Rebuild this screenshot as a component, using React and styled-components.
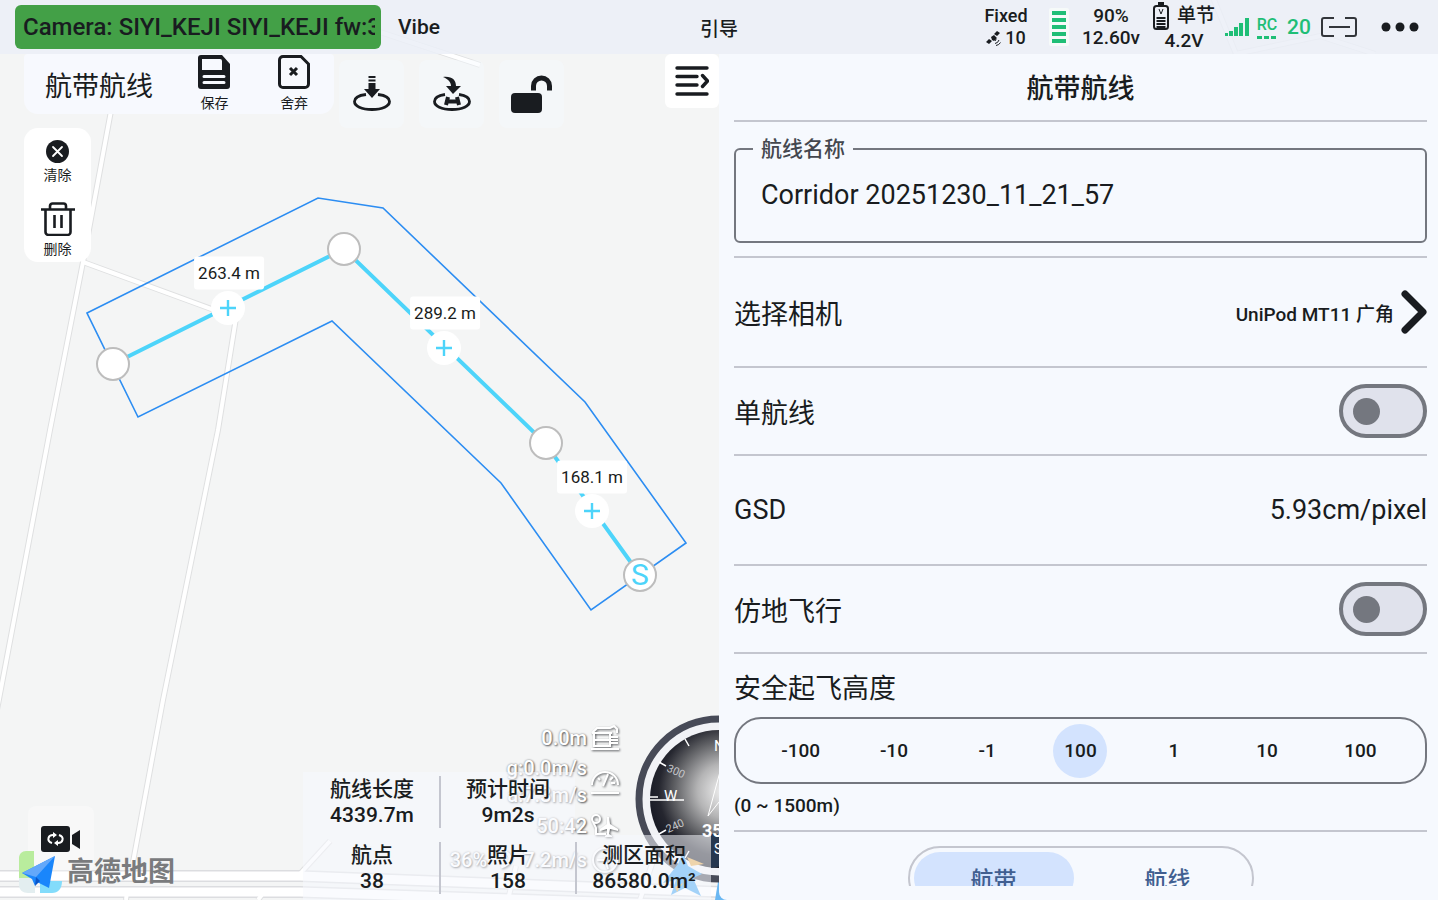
import React, { useState } from 'react';
import styled, { createGlobalStyle } from 'styled-components';

const GlobalStyle = createGlobalStyle`
	* {
		box-sizing: border-box;
	}
	body {
		margin: 0;
		overflow: hidden;
		font-family: Roboto, 'Noto Sans CJK SC', sans-serif;
		color: #191c20;
	}
	button, input {
		font: inherit;
		color: inherit;
		margin: 0;
	}
	button {
		border: 0;
		padding: 0;
		background: none;
		cursor: pointer;
	}
	svg {
		display: block;
		flex: none;
	}
`;

const Screen = styled.div`
	position: relative;
	display: flex;
	flex-direction: column;
	height: 100vh;
	overflow: hidden;
	background: #f4f5f5;
`;

/* ---------- map ---------- */

const MapLayer = styled.div`
	position: absolute;
	inset: 0;
	overflow: hidden;
`;

const Pin = styled.button`
	position: absolute;
	left: ${p => p.$x}px;
	top: ${p => p.$y}px;
	width: 34px;
	height: 34px;
	transform: translate(-50%, -50%);
	display: flex;
	align-items: center;
	justify-content: center;
	border-radius: 50%;
	background: #fff;
	border: ${p => (p.$plain ? '0' : '2px solid #bdbdbd')};
	color: #4dd4fa;
	font-size: 30px;
	line-height: 30px;
`;

const Distance = styled.span`
	position: absolute;
	left: ${p => p.$x}px;
	top: ${p => p.$y}px;
	transform: translate(-50%, -50%);
	padding: 0 4px;
	border-radius: 3px;
	background: #fff;
	font-size: 17px;
	line-height: 33px;
	white-space: nowrap;
`;

/* ---------- status bar ---------- */

const TopBar = styled.header`
	position: relative;
	display: grid;
	grid-template-columns: 1fr auto 1fr;
	align-items: center;
	height: 54px;
	padding: 0 2px;
	background: rgba(235, 238, 247, 0.85);
	font-weight: 500;
`;

const BarLeft = styled.div`
	display: flex;
	align-items: center;
	gap: 17px;
	padding-left: 13px;
	font-size: 21px;
	min-width: 0;
`;

const CameraBanner = styled.div`
	width: 366px;
	height: 44px;
	padding: 0 6px 0 8px;
	border-radius: 6px;
	background: #43a047;
	font-size: 24px;
	line-height: 44px;

	span {
		display: block;
		overflow: hidden;
		white-space: nowrap;
	}
`;

const FlightMode = styled.div`
	font-size: 19px;
`;

const BarRight = styled.div`
	display: flex;
	align-items: center;
	justify-content: flex-end;
	font-size: 19px;
	line-height: 22px;
`;

const Status = styled.div`
	display: flex;
	flex-direction: column;
	align-items: center;
	justify-content: center;
	width: ${p => p.$w}px;
	color: ${p => (p.$good ? '#1fbe76' : 'inherit')};
	font-size: ${p => p.$size || 19}px;
	white-space: nowrap;
`;

const Inline = styled.span`
	display: flex;
	align-items: center;
	gap: ${p => p.$gap || 4}px;
`;

/* ---------- map tools ---------- */

const Body = styled.div`
	position: relative;
	display: grid;
	grid-template-columns: 1fr 1fr;
	flex: 1;
	min-height: 0;
`;

const MapPane = styled.main`
	position: relative;
	overflow: hidden;
	pointer-events: none;

	button {
		pointer-events: auto;
	}
`;

const ToolRow = styled.div`
	display: flex;
	align-items: flex-start;
	padding-left: 24px;
`;

const RouteCard = styled.div`
	display: flex;
	align-items: center;
	width: 310px;
	height: 60px;
	padding-left: 21px;
	border-radius: 4px 4px 14px 14px;
	background: #f7f9fe;
	font-size: 27px;
`;

const RouteName = styled.span`
	width: 130px;
`;

const IconButton = styled.button`
	display: flex;
	flex-direction: column;
	align-items: center;
	gap: ${p => p.$gap || 2}px;
	width: ${p => p.$w || 80}px;
	font-size: 14px;
	line-height: 20px;
`;

const SquareTools = styled.div`
	display: flex;
	gap: 15px;
	padding: 6px 0 0 5px;
`;

const SquareButton = styled.button`
	display: flex;
	align-items: center;
	justify-content: center;
	width: 65px;
	height: 68px;
	border-radius: 8px;
	background: rgba(246, 249, 255, 0.4);
`;

const CollapseButton = styled.button`
	display: flex;
	align-items: center;
	justify-content: center;
	width: 54px;
	height: 54px;
	margin-left: auto;
	border-radius: 6px;
	background: #fff;
`;

const SideCard = styled.div`
	display: flex;
	flex-direction: column;
	align-items: center;
	gap: 17px;
	width: 67px;
	height: 134px;
	margin-left: 24px;
	padding-top: 12px;
	border-radius: 14px;
	background: #fff;
`;

const VideoButton = styled.button`
	position: absolute;
	left: 28px;
	bottom: 28px;
	display: flex;
	align-items: center;
	justify-content: center;
	width: 66px;
	height: 66px;
	border-radius: 8px;
	background: rgba(255, 255, 255, 0.35);
`;

const MapBrand = styled.div`
	position: absolute;
	left: 18px;
	bottom: 6px;
	display: flex;
	align-items: center;
	gap: 5px;
	color: #7a7b7d;
	font-size: 27px;
	line-height: 44px;
	font-weight: 700;
`;

const Compass = styled.div`
	position: absolute;
	right: -84px;
	bottom: 17px;
`;

const MapMarker = styled.div`
	position: absolute;
	right: 12px;
	bottom: 3px;
`;

const Telemetry = styled.div`
	position: absolute;
	right: 100px;
	bottom: 23px;
	display: flex;
	flex-direction: column;
	align-items: flex-end;
	color: #fff;
	font-size: 20px;
	font-weight: 500;
	line-height: 27px;
	text-shadow: 1px 1px 2px #5c5e61, 0 0 2px #85878a;

	svg {
		filter: drop-shadow(1px 1px 1px #5c5e61);
	}
`;

const Reading = styled.div`
	display: flex;
	align-items: center;
	gap: 4px;
	min-height: 34px;
	text-align: right;
`;

const Stats = styled.div`
	position: absolute;
	right: 8px;
	bottom: 0;
	display: flex;
	flex-direction: column;
	align-items: flex-start;
`;

const StatRow = styled.dl`
	display: flex;
	margin: 0;
	padding: ${p => p.$pad};
	background: rgba(245, 248, 254, 0.55);
`;

const Stat = styled.div`
	width: 136px;
	border-left: 2px solid ${p => (p.$first ? 'transparent' : '#c4c6cf')};
	text-align: center;
	font-size: 21px;
	line-height: 26px;
	font-weight: 500;

	dd, dt {
		margin: 0 -4px;
	}
`;

/* ---------- settings panel ---------- */

const Panel = styled.aside`
	padding: 0 10px 14px 15px;
	min-height: 0;
	overflow: hidden;
	display: flex;
	border-radius: 0 0 0 8px;
	background: #f6f9fe;
`;

const PanelScroll = styled.div`
	flex: 1;
	overflow: hidden;
	padding-right: 1px;
`;

const PanelTitle = styled.h1`
	margin: 0;
	font-size: 27px;
	line-height: 66px;
	padding-top: 2px;
	height: 68px;
	font-weight: 500;
	text-align: center;
	border-bottom: 2px solid #c4c6cf;
`;

const Section = styled.section`
	padding: ${p => p.$pad || '0'};
	border-bottom: 2px solid #c4c6cf;
`;

const NameField = styled.fieldset`
	margin: 0;
	padding: 0 0 13px;
	border: 2px solid #74777f;
	border-radius: 6px;

	legend {
		margin-left: 17px;
		padding: 0 8px;
		font-size: 21px;
		line-height: 26px;
		font-weight: 500;
		color: #44474e;
	}

	input {
		display: block;
		width: 100%;
		height: 66px;
		padding: 0 25px;
		border: 0;
		outline: 0;
		background: none;
		font-size: 27px;
	}
`;

const Row = styled.div`
	display: flex;
	align-items: center;
	justify-content: space-between;
	height: ${p => (p.$tall ? 110 : 88)}px;
	border-bottom: 2px solid #c4c6cf;
	font-size: 27px;
`;

const PickButton = styled.button`
	display: flex;
	align-items: center;
	gap: 7px;
	font-size: 19px;
	font-weight: 500;
`;

const Switch = styled.input`
	appearance: none;
	display: flex;
	align-items: center;
	width: 88px;
	height: 54px;
	padding-left: 10px;
	border: 4px solid #74777f;
	border-radius: 27px;
	background: #e0e2ec;
	cursor: pointer;

	&::before {
		content: '';
		width: 27px;
		height: 27px;
		border-radius: 50%;
		background: #74777f;
	}

	&:checked {
		justify-content: flex-end;
		padding: 0 10px 0 0;
		border-color: #415f91;
		background: #d3e3fe;
	}
`;

const StepLabel = styled.div`
	font-size: 27px;
	line-height: 40px;
`;

const Stepper = styled.div`
	display: grid;
	grid-template-columns: repeat(7, 1fr);
	justify-items: center;
	align-items: center;
	height: 67px;
	margin-top: 8px;
	padding: 0 18px;
	border: 2px solid #74777f;
	border-radius: 27px;
`;

const Step = styled.button`
	width: 54px;
	height: 54px;
	border-radius: 50%;
	background: ${p => (p.$current ? '#d3e3fe' : 'none')};
	font-size: 19px;
	font-weight: 500;
`;

const Hint = styled.p`
	margin: 10px 0 0;
	font-size: 19px;
	line-height: 24px;
	font-weight: 500;
`;

const Tabs = styled.div`
	display: flex;
	gap: 14px;
	width: 346px;
	height: 64px;
	margin: 14px auto 0;
	padding: 4px;
	border: 2px solid #c4c6cf;
	border-radius: 32px;
`;

const Tab = styled.button`
	flex: 1;
	border-radius: 26px;
	background: ${p => (p.$active ? '#d3e3fe' : 'none')};
	color: #415f91;
	font-size: 23px;
	font-weight: 500;
`;

/* ---------- drawings ---------- */

const ROADS = [
	'M113 100L83 262L50 430L-4 715',
	'M83 262L236 318L218 430L163 700L133 862',
	'M380 32L480 65',
	'M298 876L330 841',
	'M126 900L127 892M258 900L264 892M508 900L516 866M640 900L660 840',
	'M1212 -5L1236 54M1236 54L1320 36L1375 54',
];

function MapDrawing() {
	return (
		<svg width="1438" height="900" fill="none">
			<rect x="0" y="0" width="1438" height="900" fill="#f4f5f5" />
			{ROADS.map(d => (
				<path key={d} d={d} stroke="#dfe0e1" strokeWidth="6" />
			))}
			<path d="M0 876L300 876L720 892M0 892L300 892L720 906" stroke="#dcdde0" strokeWidth="12" />
			<path d="M0 876L300 876L720 892M0 892L300 892L720 906" stroke="#fff" strokeWidth="9" />
			{ROADS.map(d => (
				<path key={d} d={d} stroke="#fff" strokeWidth="4" />
			))}
			<path
				d="M87 313L318 198L383 208L585 402L686 543L591 610L501 483L332 321L138 417Z"
				stroke="#2c8df2"
				strokeWidth="1.6"
			/>
			<path d="M113 364L344 249L545 443L640 575" stroke="#4dd4fa" strokeWidth="4" />
			<path d="M715 900L720 870H732V900Z" fill="#6bb8f2" />
		</svg>
	);
}

const PlusIcon = () => (
	<svg width="16" height="16" viewBox="0 0 16 16" stroke="#4dd4fa" strokeWidth="2.4">
		<path d="M8 0v16M0 8h16" />
	</svg>
);

const SatelliteIcon = () => (
	<svg width="15" height="15" viewBox="0 0 15 15" fill="#191c20">
		<path d="M8 3l3-3 3 2-3 3zM0 11l3-3 3 2-3 3zM5 6l3-2 3 3-3 3-2-1z" />
		<path d="M9 10a3 3 0 0 0 1-2M9 12.500a5 5 0 0 0 4-3.500M10 14.500a6 6 0 0 0 4.500-3" fill="none" stroke="#191c20" />
	</svg>
);

const PowerBars = () => (
	<svg width="20" height="38" viewBox="0 0 20 38" fill="#1fbe76">
		<rect width="20" height="38" rx="2" fill="#f6faf9" />
		{[3, 10, 17, 24, 31].map(y => (
			<rect key={y} x="3" y={y} width="14" height="4" />
		))}
	</svg>
);

const CellIcon = () => (
	<svg width="16" height="28" viewBox="0 0 16 28" fill="none" stroke="#191c20">
		<rect x="1" y="4" width="14" height="23" rx="2.500" strokeWidth="2" />
		<path d="M5 1.500h6" strokeWidth="3" />
		<path d="M6 7l2 5 2-5" />
		<path d="M3.500 16h9M3.500 19h9M3.500 22h9M3.500 25h9" strokeWidth="2" />
	</svg>
);

const SignalIcon = () => (
	<svg width="24" height="18" viewBox="0 0 24 18" fill="#1fbe76">
		<path d="M0 15h3v3H0zM4 13h4v5H4zM9 9h4v9H9zM14 5h4v13h-4zM20 0h4v18h-4z" />
	</svg>
);

const RcIcon = () => (
	<svg width="20" height="4" viewBox="0 0 20 4" fill="#1fbe76">
		<path d="M0 0h5v3H0zM7 0h5v3H7zM14 0h5v3h-5z" />
	</svg>
);

const LinkIcon = () => (
	<svg width="36" height="20" viewBox="0 0 36 20" fill="none" stroke="#33363b" strokeWidth="2">
		<path d="M13 1H3a2 2 0 0 0-2 2v14a2 2 0 0 0 2 2h10M24 1h9a2 2 0 0 1 2 2v14a2 2 0 0 1-2 2h-9M8 10h21" />
	</svg>
);

const DotsIcon = () => (
	<svg width="38" height="10" viewBox="0 0 38 10" fill="#191c20">
		<circle cx="5" cy="5" r="4.500" />
		<circle cx="19" cy="5" r="4.500" />
		<circle cx="33" cy="5" r="4.500" />
	</svg>
);

const SaveIcon = () => (
	<svg width="32" height="34" viewBox="0 0 32 34">
		<path d="M3 0h21l8 9v22a3 3 0 0 1-3 3H3a3 3 0 0 1-3-3V3a3 3 0 0 1 3-3z" fill="#191c20" />
		<path d="M4 4h18a2 2 0 0 1 2 2v9H4zM6 20h20a1.500 1.500 0 0 1 0 3H6a1.500 1.500 0 0 1 0-3zM6 26h20a1.500 1.500 0 0 1 0 3H6a1.500 1.500 0 0 1 0-3z" fill="#f7f9fe" />
	</svg>
);

const DiscardIcon = () => (
	<svg width="32" height="34" viewBox="0 0 32 34" fill="none" stroke="#191c20" strokeWidth="3">
		<path d="M5 1.500h18l7.500 7.500v20a3.500 3.500 0 0 1-3.500 3.500H5a3.500 3.500 0 0 1-3.500-3.500V5A3.500 3.500 0 0 1 5 1.500z" />
		<path d="M12 13l7 7M19 13l-7 7" />
	</svg>
);

const LandIcon = () => (
	<svg width="38" height="36" viewBox="0 0 38 36" fill="none" stroke="#191c20">
		<path d="M13 18.500C5 19.500 1.500 22.500 1.500 25.500c0 4.500 7 8 17.500 8s17.500-3.500 17.500-8c0-3-3.500-6-11.500-7" strokeWidth="2.800" />
		<path d="M15.500 0h7v2h-7zM15.500 3.500h7v2h-7zM15.500 7h7v6h4.500l-8 9-8-9h4.500z" fill="#191c20" stroke="none" />
	</svg>
);

const ReturnIcon = () => (
	<svg width="38" height="36" viewBox="0 0 38 36" fill="none" stroke="#191c20">
		<path d="M12 18.500C5 19.500 1.500 22.500 1.500 25.500c0 4.500 7 8 17.500 8s17.500-3.500 17.500-8c0-3-3.500-6-10.500-7" strokeWidth="2.800" />
		<path d="M10 1c9-1 13 3 13 9h5l-8 8-7-8h5c0-4-3-7-8-9z" fill="#191c20" stroke="none" />
		<path d="M15 21l-2 8M24 21l2 8M13 25.500h12" strokeWidth="4" />
	</svg>
);

const UnlockIcon = () => (
	<svg width="41" height="38" viewBox="0 0 41 38">
		<rect y="18" width="31" height="20" rx="4" fill="#191c20" />
		<path d="M22.500 15.500V11a8 8 0 0 1 16 0v4.500" fill="none" stroke="#191c20" strokeWidth="5" />
	</svg>
);

const CollapseIcon = () => (
	<svg width="34" height="30" viewBox="0 0 34 30" fill="none" stroke="#191c20" strokeWidth="3.400" strokeLinecap="round">
		<path d="M2 2h30M2 10.500h20M2 19h20M2 28h30M27.500 9.500l5 5.500-5 5.500" />
	</svg>
);

const ClearIcon = () => (
	<svg width="23" height="23" viewBox="0 0 23 23" stroke="#fff" strokeWidth="1.800" strokeLinecap="round">
		<circle cx="11.500" cy="11.500" r="11.500" fill="#191c20" stroke="none" />
		<path d="M7 7l9 9M16 7l-9 9" />
	</svg>
);

const TrashIcon = () => (
	<svg width="34" height="34" viewBox="0 0 34 34" fill="none" stroke="#191c20" strokeWidth="2.600">
		<path d="M0 7.500h34M9 7V4a2.500 2.500 0 0 1 2.500-2.500h11A2.500 2.500 0 0 1 25 4v3M4.500 8v22a3 3 0 0 0 3 3h19a3 3 0 0 0 3-3V8M13.500 13v13M20.500 13v13" />
	</svg>
);

const VideoIcon = () => (
	<svg width="40" height="26" viewBox="0 0 40 26" fill="none">
		<rect width="29" height="26" rx="3" fill="#191c20" />
		<path d="M31 9l8-5v19l-8-5z" fill="#191c20" />
		<path d="M11 17c-3-1-4-3-3.500-5 .500-2 2-3 4.500-3M18 9c3 1 4 3 3.500 5-.500 2-2 3-4.500 3" stroke="#fff" strokeWidth="2" />
		<path d="M12 6l4 3-4 3zM17 14l-4 3 4 3z" fill="#fff" />
	</svg>
);

const BrandIcon = () => (
	<svg width="44" height="44" viewBox="0 0 44 44">
		<path d="M1 28V8c0-4 3-7 7-7h8v27z" fill="#b9ec9d" />
		<path d="M1 28h16v15H10c-5 0-9-3-9-8z" fill="#e3eef0" />
		<path d="M22 31h22c0 8-4 12-10 12H22z" fill="#83dcfb" />
		<path d="M4 23L37 6 31 38 19 32 17 36 14 29z" fill="#1a86fb" />
		<path d="M37 6L4 23l14 4z" fill="#63a8fa" />
		<path d="M18 27l-1 9 5-5z" fill="#0a55c8" />
	</svg>
);

const ChevronIcon = () => (
	<svg width="26" height="44" viewBox="0 0 26 44" fill="none" stroke="#191c20" strokeWidth="7" strokeLinecap="round" strokeLinejoin="round">
		<path d="M4 4l18 18L4 40" />
	</svg>
);

const HouseIcon = () => (
	<svg width="28" height="26" viewBox="0 0 28 26" fill="none" stroke="#fff" strokeWidth="2">
		<path d="M1 8l5-5h13l4-2 3 3v4M1 8h20M3 8v13h16V8M3 15h24M20 12h7M20 18h7M0 24h28" />
	</svg>
);

const GaugeIcon = () => (
	<svg width="28" height="26" viewBox="0 0 28 26" fill="none" stroke="#fff" strokeWidth="2">
		<path d="M1 16a13 13 0 0 1 26 0M12 17l5-12M7 9l2 2M22 8l-3 3M24 14h-4M0 24h28" />
	</svg>
);

const PlaneIcon = () => (
	<svg width="28" height="26" viewBox="0 0 28 26" fill="none" stroke="#fff" strokeWidth="2">
		<circle cx="5" cy="6" r="4" />
		<path d="M2 9l3 6v6h10" />
		<path d="M16 4l2 0 1 7 8 5v2l-8-2-1 5 3 2v1h-7v-1l2-2v-5l-7 2v-2l7-5z" fill="#fff" stroke="none" />
	</svg>
);

const FanIcon = () => (
	<svg width="28" height="28" viewBox="0 0 28 28" fill="none" stroke="#fff" strokeWidth="2">
		<circle cx="14" cy="14" r="12" />
		<path d="M14 14l8-6M14 14H6M14 14l3 9" />
	</svg>
);

const MoonIcon = () => (
	<svg width="28" height="20" viewBox="0 0 28 20" fill="none" stroke="#fff" strokeWidth="3">
		<path d="M14 2c7 3 7 12-4 15" />
	</svg>
);

function CompassDial() {
	return (
		<svg width="168" height="168" viewBox="0 0 168 168" fontFamily="Roboto" fill="#fff">
			<defs>
				<radialGradient id="dial" cx="54%" cy="44%" r="56%">
					<stop offset="0" stopColor="#f4f4f4" />
					<stop offset="0.350" stopColor="#b4b4b5" />
					<stop offset="0.650" stopColor="#5e5f63" />
					<stop offset="0.850" stopColor="#25262f" />
					<stop offset="1" stopColor="#191b26" />
				</radialGradient>
			</defs>
			<circle cx="84" cy="84" r="80" fill="#f1f2f6" stroke="#474a57" strokeWidth="7" />
			<circle cx="84" cy="84" r="69" fill="url(#dial)" />
			<path d="M76 119h70l-20 25-50 9z" fill="#26374f" />
			<path d="M15 85h34M15 82h8M24 47l7 4M50 24l4 7M24 119l7-4M50 143l4-7" stroke="#fff" strokeWidth="1.500" />
			<text x="79" y="36" fontSize="15">N</text>
			<text x="29" y="86" fontSize="15">W</text>
			<text x="79" y="139" fontSize="14">S</text>
			<g fontSize="11" fill="#c5c6ca">
				<text x="31" y="56" transform="rotate(24 31 56)">300</text>
				<text x="33" y="118" transform="rotate(-24 33 118)">240</text>
			</g>
			<path d="M73 101l13-48 10 40-12-6z" fill="none" stroke="#fff" />
			<text x="67" y="122" fontSize="18" fontWeight="700">358</text>
		</svg>
	);
}

const MarkerDrawing = () => (
	<svg width="44" height="46" viewBox="0 0 44 46">
		<path d="M0 32L15 13 20 2l5 13 14 8-9 4 8 18-16-8-14 7 5-15z" fill="#3fa5f2" />
		<path d="M24 6l17 7-13 2zM12 36l8-4-6 9z" fill="#e5a94a" />
	</svg>
);

const pins = [[113, 364], [344, 249], [546, 443]];
const midpoints = [[228, 308], [444, 348], [592, 511]];
const distances = [
	{ text: '263.4 m', x: 229, y: 273 },
	{ text: '289.2 m', x: 445, y: 313 },
	{ text: '168.1 m', x: 592, y: 477 },
];
const steps = ['-100', '-10', '-1', '100', '1', '10', '100'];

function StatItem({ label, value, first }) {
	return (
		<Stat $first={first}>
			<dt>{label}</dt>
			<dd>{value}</dd>
		</Stat>
	);
}

function StatusBar() {
	return (
		<TopBar>
			<BarLeft>
				<CameraBanner>
					<span>Camera: SIYI_KEJI SIYI_KEJI fw:3</span>
				</CameraBanner>
				<span>Vibe</span>
			</BarLeft>
			<FlightMode>引导</FlightMode>
			<BarRight>
				<Status $w={68} $size={18}>
					<span>Fixed</span>
					<Inline><SatelliteIcon />10</Inline>
				</Status>
				<Status $w={38}><PowerBars /></Status>
				<Status $w={66}>
					<span>90%</span>
					<span>12.60v</span>
				</Status>
				<Status $w={80}>
					<Inline $gap={8}><CellIcon />单节</Inline>
					<span>4.2V</span>
				</Status>
				<Status $w={26}><SignalIcon /></Status>
				<Status $w={34} $size={16} $good>
					<span>RC</span>
					<RcIcon />
				</Status>
				<Status $w={30} $size={21} $good>20</Status>
				<Status $w={50}><LinkIcon /></Status>
				<Status as="button" $w={72} aria-label="更多"><DotsIcon /></Status>
			</BarRight>
		</TopBar>
	);
}

function SettingsPanel() {
	const [name, setName] = useState('Corridor 20251230_11_21_57');
	const [tab, setTab] = useState('航带');

	return (
		<Panel>
			<PanelScroll>
				<PanelTitle>航带航线</PanelTitle>
				<Section $pad="14px 0 13px">
					<NameField>
						<legend><label htmlFor="route-name">航线名称</label></legend>
						<input id="route-name" type="text" value={name} onChange={e => setName(e.target.value)} />
					</NameField>
				</Section>
				<Row $tall>
					<span>选择相机</span>
					<PickButton>
						UniPod MT11 广角
						<ChevronIcon />
					</PickButton>
				</Row>
				<Row>
					<label htmlFor="single-line">单航线</label>
					<Switch id="single-line" type="checkbox" />
				</Row>
				<Row $tall>
					<span>GSD</span>
					<span>5.93cm/pixel</span>
				</Row>
				<Row>
					<label htmlFor="terrain">仿地飞行</label>
					<Switch id="terrain" type="checkbox" />
				</Row>
				<Section $pad="15px 0 12px">
					<StepLabel>安全起飞高度</StepLabel>
					<Stepper>
						{steps.map((step, i) => (
							<Step key={i} $current={i === 3}>{step}</Step>
						))}
					</Stepper>
					<Hint>(0 ~ 1500m)</Hint>
				</Section>
				<Tabs>
					{['航带', '航线'].map(t => (
						<Tab key={t} $active={t === tab} onClick={() => setTab(t)}>{t}</Tab>
					))}
				</Tabs>
			</PanelScroll>
		</Panel>
	);
}

export default function App() {
	return (
		<Screen>
			<GlobalStyle />
			<MapLayer>
				<MapDrawing />
				{midpoints.map(([x, y]) => (
					<Pin key={x} $x={x} $y={y} $plain aria-label="添加航点"><PlusIcon /></Pin>
				))}
				{distances.map(d => (
					<Distance key={d.text} $x={d.x} $y={d.y}>{d.text}</Distance>
				))}
				{pins.map(([x, y]) => (
					<Pin key={x} $x={x} $y={y} aria-label="航点" />
				))}
				<Pin $x={640} $y={575}>S</Pin>
			</MapLayer>
			<StatusBar />
			<Body>
				<MapPane>
					<ToolRow>
						<RouteCard>
							<RouteName>航带航线</RouteName>
							<IconButton $gap={4}><SaveIcon />保存</IconButton>
							<IconButton $gap={4}><DiscardIcon />舍弃</IconButton>
						</RouteCard>
						<SquareTools>
							<SquareButton aria-label="降落"><LandIcon /></SquareButton>
							<SquareButton aria-label="返航"><ReturnIcon /></SquareButton>
							<SquareButton aria-label="解锁"><UnlockIcon /></SquareButton>
						</SquareTools>
						<CollapseButton aria-label="收起"><CollapseIcon /></CollapseButton>
					</ToolRow>
					<SideCard>
						<IconButton $w={67}><ClearIcon />清除</IconButton>
						<IconButton $w={67} $gap={3}><TrashIcon />删除</IconButton>
					</SideCard>
					<VideoButton aria-label="切换视频"><VideoIcon /></VideoButton>
					<MapBrand><BrandIcon />高德地图</MapBrand>
					<Compass><CompassDial /></Compass>
					<MapMarker><MarkerDrawing /></MapMarker>
					<Telemetry>
						<Reading>0.0m<HouseIcon /></Reading>
						<Reading>
							<span>g:0.0m/s<br />a:7.3m/s</span>
							<GaugeIcon />
						</Reading>
						<Reading>50:42<PlaneIcon /></Reading>
						<Reading>36%<MoonIcon />7.2m/s<FanIcon /></Reading>
					</Telemetry>
					<Stats>
						<StatRow $pad="4px 0 7px">
							<StatItem first label="航线长度" value="4339.7m" />
							<StatItem label="预计时间" value="9m2s" />
						</StatRow>
						<StatRow $pad="7px 0 6px">
							<StatItem first label="航点" value="38" />
							<StatItem label="照片" value="158" />
							<StatItem label="测区面积" value="86580.0m²" />
						</StatRow>
					</Stats>
				</MapPane>
				<SettingsPanel />
			</Body>
		</Screen>
	);
}
